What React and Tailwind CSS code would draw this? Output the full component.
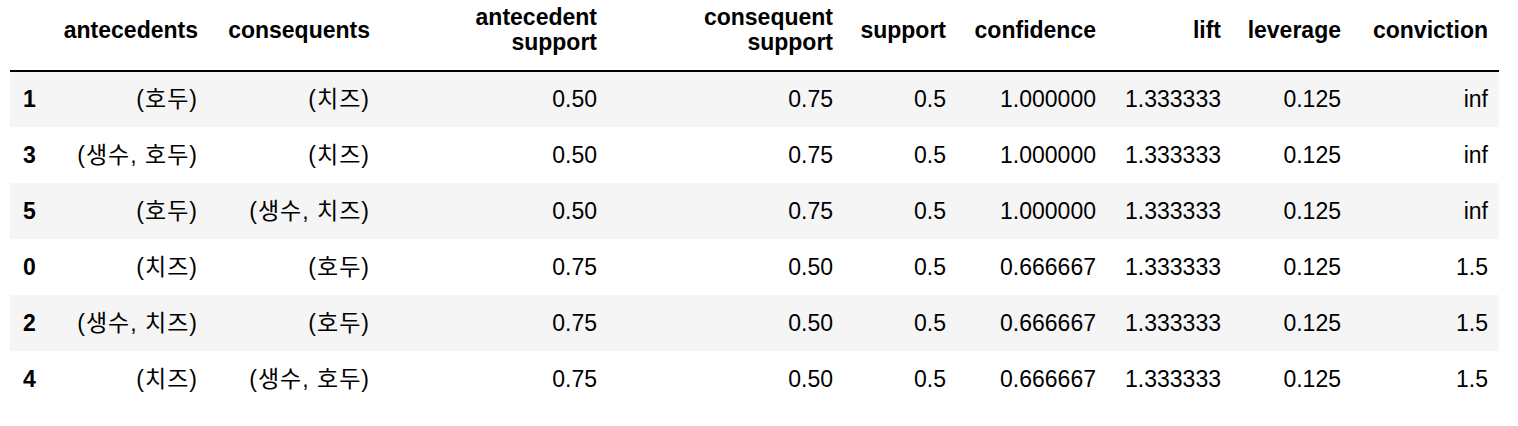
import React from "react";

const columns = [
  { key: "antecedents", label: ["antecedents"], w: "w-[158px]" },
  { key: "consequents", label: ["consequents"], w: "w-[172px]" },
  { key: "as", label: ["antecedent", "support"], w: "w-[227px]" },
  { key: "cs", label: ["consequent", "support"], w: "w-[236px]" },
  { key: "support", label: ["support"], w: "w-[113px]" },
  { key: "confidence", label: ["confidence"], w: "w-[150px]" },
  { key: "lift", label: ["lift"], w: "w-[125px]" },
  { key: "leverage", label: ["leverage"], w: "w-[120px]" },
  { key: "conviction", label: ["conviction"], w: "w-[147px]" },
];

const rows = [
  ["1", "(호두)", "(치즈)", "0.50", "0.75", "0.5", "1.000000", "1.333333", "0.125", "inf"],
  ["3", "(생수, 호두)", "(치즈)", "0.50", "0.75", "0.5", "1.000000", "1.333333", "0.125", "inf"],
  ["5", "(호두)", "(생수, 치즈)", "0.50", "0.75", "0.5", "1.000000", "1.333333", "0.125", "inf"],
  ["0", "(치즈)", "(호두)", "0.75", "0.50", "0.5", "0.666667", "1.333333", "0.125", "1.5"],
  ["2", "(생수, 치즈)", "(호두)", "0.75", "0.50", "0.5", "0.666667", "1.333333", "0.125", "1.5"],
  ["4", "(치즈)", "(생수, 호두)", "0.75", "0.50", "0.5", "0.666667", "1.333333", "0.125", "1.5"],
];

const App = () => {
  return (
    <div
      className="min-h-screen bg-white text-black pl-[10px]"
      style={{ fontFamily: '"Liberation Sans", Arial, "Noto Sans CJK KR", sans-serif' }}
    >
      <table className="table-fixed border-collapse text-[23px] leading-[25px] w-[1489px]">
        <thead>
          <tr className="h-[71px] border-b-2 border-black">
            <th className="w-[41px]"></th>
            {columns.map((c) => (
              <th
                key={c.key}
                className={`${c.w} px-[11px] pb-[10px] text-right align-middle font-bold whitespace-nowrap`}
              >
                {c.label.map((l) => (
                  <div key={l}>{l}</div>
                ))}
              </th>
            ))}
          </tr>
        </thead>
        <tbody>
          {rows.map((r, i) => (
            <tr key={r[0]} className={`h-[56px] ${i % 2 === 0 ? "bg-[#f5f5f5]" : "bg-white"}`}>
              <th className="pl-[13px] text-left align-middle font-bold">{r[0]}</th>
              {r.slice(1).map((v, j) => (
                <td
                  key={j}
                  className={`px-[11px] text-right align-middle whitespace-nowrap ${j < 2 ? "tracking-[1px]" : ""}`}
                >
                  {v}
                </td>
              ))}
            </tr>
          ))}
        </tbody>
      </table>
    </div>
  );
};

export default App;
